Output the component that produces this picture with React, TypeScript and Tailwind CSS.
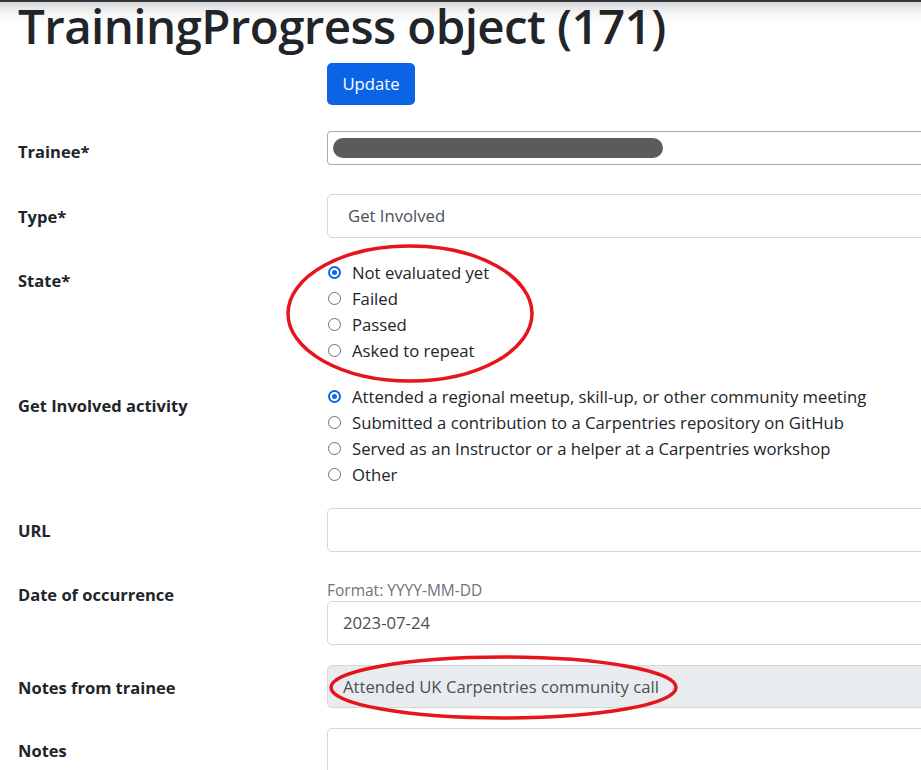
import React from "react";

function Radio({ checked }: { checked?: boolean }) {
  if (checked) {
    return (
      <span className="ml-[1px] flex h-[13px] w-[13px] shrink-0 items-center justify-center rounded-full border-2 border-[#0b67e6] bg-white">
        <span className="h-[5px] w-[5px] rounded-full bg-[#0b67e6]" />
      </span>
    );
  }
  return <span className="ml-[1px] h-[13px] w-[13px] shrink-0 rounded-full border border-[#6f6f6f] bg-white" />;
}

function RadioList({ items, checkedIndex }: { items: string[]; checkedIndex: number }) {
  return (
    <div className="flex flex-col">
      {items.map((t, i) => (
        <div key={t} className="flex h-[26.33px] items-center gap-[11px] text-[16.7px] text-[#212529]">
          <Radio checked={i === checkedIndex} />
          <span>{t}</span>
        </div>
      ))}
    </div>
  );
}

function Label({ text, pt }: { text: string; pt: string }) {
  return (
    <div className={`w-[327px] shrink-0 pl-[18px] text-[16.5px] font-bold leading-[24px] text-[#212529] ${pt}`}>
      {text}
    </div>
  );
}

export default function App() {
  return (
    <div className="relative h-[770px] w-[921px] overflow-hidden border-t-2 border-[#30363d] bg-[linear-gradient(to_bottom,#d6d6d6_0px,#f3f3f3_10px,#ffffff_22px)] font-['Open_Sans',sans-serif] text-[#212529]">
      <div className="h-[61px]">
        <h1 className="pl-[18px] text-[47.5px] font-semibold leading-[48px] tracking-[-0.6px] text-[#212529]">
          TrainingProgress object (171)
        </h1>
      </div>

      <div className="flex">
        <div className="w-[327px] shrink-0" />
        <button className="flex h-[42px] w-[88px] items-center justify-center rounded-[5px] bg-[#0b63e5] text-[16.7px] text-white">
          Update
        </button>
      </div>

      <div className="mt-[26px] flex">
        <Label text="Trainee*" pt="pt-[9px]" />
        <div className="flex h-[34px] w-[640px] shrink-0 items-center rounded-[4px] border border-[#aaaaaa] bg-white pl-[5px]">
          <div className="h-[20px] w-[330px] rounded-full bg-[#5b5b5c]" />
        </div>
      </div>

      <div className="mt-[29px] flex">
        <Label text="Type*" pt="pt-[11px]" />
        <div className="flex h-[44px] w-[640px] shrink-0 items-center rounded-[5px] border border-[#d4d7dc] bg-white pl-[20px] text-[16.7px] text-[#495057]">
          Get Involved
        </div>
      </div>

      <div className="mt-[21px] flex h-[105px]">
        <Label text="State*" pt="pt-[10px]" />
        <RadioList items={["Not evaluated yet", "Failed", "Passed", "Asked to repeat"]} checkedIndex={0} />
      </div>

      <div className="mt-[19px] flex h-[105px]">
        <Label text="Get Involved activity" pt="pt-[11px]" />
        <RadioList
          items={[
            "Attended a regional meetup, skill-up, or other community meeting",
            "Submitted a contribution to a Carpentries repository on GitHub",
            "Served as an Instructor or a helper at a Carpentries workshop",
            "Other",
          ]}
          checkedIndex={0}
        />
      </div>

      <div className="mt-[20px] flex">
        <Label text="URL" pt="pt-[11px]" />
        <div className="h-[44px] w-[640px] shrink-0 rounded-[5px] border border-[#d4d7dc] bg-white" />
      </div>

      <div className="mt-[20px] flex">
        <Label text="Date of occurrence" pt="pt-[11px]" />
        <div className="w-[640px] shrink-0">
          <div className="h-[29px] pt-[8px] text-[15.5px] leading-[20px] text-[#6c757d]">Format: YYYY-MM-DD</div>
          <div className="flex h-[44px] items-center rounded-[5px] border border-[#d4d7dc] bg-white pl-[15px] text-[16.7px] text-[#495057]">
            2023-07-24
          </div>
        </div>
      </div>

      <div className="mt-[20px] flex">
        <Label text="Notes from trainee" pt="pt-[11px]" />
        <div className="flex h-[43px] w-[640px] shrink-0 items-center rounded-[5px] border border-[#d4d7dc] bg-[#e9ecef] pl-[15px] text-[16.7px] text-[#495057]">
          Attended UK Carpentries community call
        </div>
      </div>

      <div className="mt-[20px] flex">
        <Label text="Notes" pt="pt-[11px]" />
        <div className="h-[90px] w-[640px] shrink-0 rounded-[5px] border border-[#d4d7dc] bg-white" />
      </div>

      <svg className="pointer-events-none absolute left-0 top-0" width="921" height="770" viewBox="0 0 921 770">
        <ellipse cx="410" cy="311.5" rx="122" ry="67.5" fill="none" stroke="#e8141b" strokeWidth="3.5" />
        <ellipse cx="503.5" cy="685.5" rx="172.5" ry="30.5" fill="none" stroke="#e8141b" strokeWidth="3.5" />
      </svg>
    </div>
  );
}
